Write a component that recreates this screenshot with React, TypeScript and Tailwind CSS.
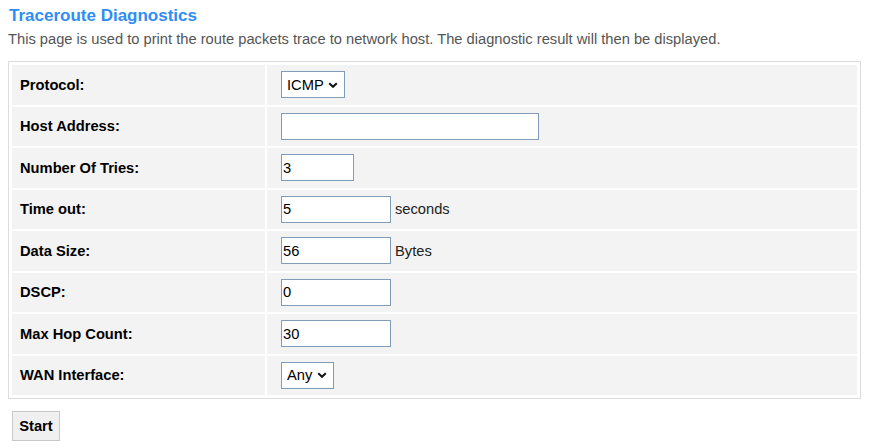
import React from "react";

const Chevron = () => (
  <svg width="10" height="6" viewBox="0 0 10 6" className="pointer-events-none absolute right-[6px] top-1/2 -translate-y-1/2">
    <path d="M1.2 1.2 L5 4.8 L8.8 1.2" fill="none" stroke="#111" strokeWidth="2" />
  </svg>
);

function Select({ value, width }: { value: string; width: string }) {
  return (
    <div className={`relative ${width} h-[27px] border border-[#7f9db9] bg-white`}>
      <select
        defaultValue={value}
        className="h-full w-full appearance-none bg-white pl-[5px] pr-[20px] text-[14.7px] text-black outline-none"
      >
        <option>{value}</option>
      </select>
      <Chevron />
    </div>
  );
}

function TextInput({ value, width }: { value: string; width: string }) {
  return (
    <input
      defaultValue={value}
      className={`${width} h-[27px] border border-[#7f9db9] bg-white px-[1px] text-[14.7px] text-black outline-none`}
    />
  );
}

export default function App() {
  const rows: { label: string; control: React.ReactNode }[] = [
    { label: "Protocol:", control: <Select value="ICMP" width="w-[64px]" /> },
    { label: "Host Address:", control: <TextInput value="" width="w-[258px]" /> },
    { label: "Number Of Tries:", control: <TextInput value="3" width="w-[73px]" /> },
    {
      label: "Time out:",
      control: (
        <div className="flex items-center gap-[4px]">
          <TextInput value="5" width="w-[110px]" />
          <span className="text-[14.7px] text-[#222]">seconds</span>
        </div>
      ),
    },
    {
      label: "Data Size:",
      control: (
        <div className="flex items-center gap-[4px]">
          <TextInput value="56" width="w-[110px]" />
          <span className="text-[14.7px] text-[#222]">Bytes</span>
        </div>
      ),
    },
    { label: "DSCP:", control: <TextInput value="0" width="w-[110px]" /> },
    { label: "Max Hop Count:", control: <TextInput value="30" width="w-[110px]" /> },
    { label: "WAN Interface:", control: <Select value="Any" width="w-[53px]" /> },
  ];

  return (
    <div className="min-h-[448px] bg-white px-[8px] pt-[6px] text-black" style={{ fontFamily: '"Liberation Sans", Arial, sans-serif' }}>
      <h1 className="pl-[1px] text-[17px] font-bold leading-[19px] text-[#2f8df5]">Traceroute Diagnostics</h1>
      <p className="mt-[6px] text-[14.7px] leading-[17px] text-[#555]">
        This page is used to print the route packets trace to network host. The diagnostic result will then be displayed.
      </p>
      <div className="mt-[13px] w-[853px] border border-[#dcdcdc] p-[3px]">
        <div className="grid grid-cols-[253px_590px] gap-[2px]">
          {rows.map((r) => (
            <React.Fragment key={r.label}>
              <div className="flex h-[39.5px] items-center bg-[#f3f3f3] pl-[8px] text-[14.7px] font-bold text-black">
                {r.label}
              </div>
              <div className="flex h-[39.5px] items-center bg-[#f3f3f3] pl-[14px]">{r.control}</div>
            </React.Fragment>
          ))}
        </div>
      </div>
      <button className="ml-[4px] mt-[12px] h-[30px] w-[48px] border border-[#c8c8c8] bg-[#f0f0f0] text-[14.7px] font-bold text-black">
        Start
      </button>
    </div>
  );
}
